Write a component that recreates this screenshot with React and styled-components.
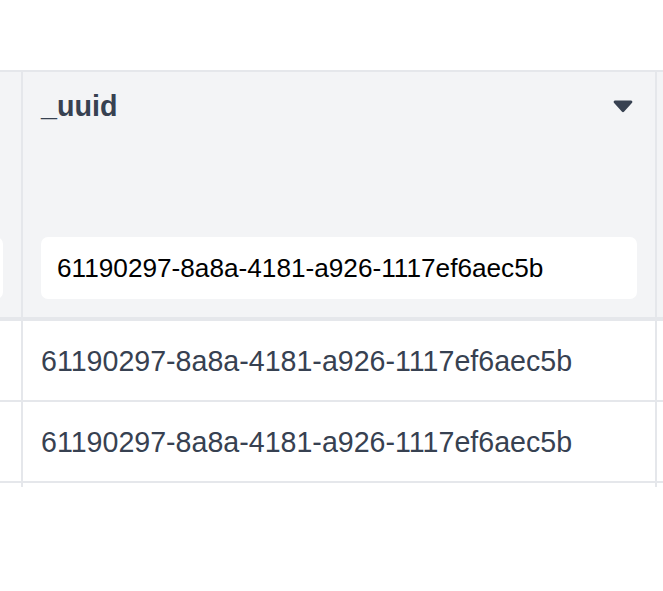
import React from "react";
import styled, { createGlobalStyle } from "styled-components";

const Global = createGlobalStyle`
  html, body { margin: 0; padding: 0; background: #ffffff; }
  body { font-family: "Liberation Sans", Arial, sans-serif; }
  * { box-sizing: border-box; }
`;

const Page = styled.div`
  width: 663px;
  height: 591px;
  padding-top: 70px;
  overflow: hidden;
  background: #ffffff;
`;

const Viewport = styled.div`
  width: 100%;
  overflow: hidden;
  border-top: 2px solid #e5e7eb;
`;

const Table = styled.div`
  display: flex;
  flex-direction: column;
  width: max-content;
  margin-left: -177px;
`;

const Row = styled.div`
  display: flex;
  background: ${(p) => (p.$head ? "#f3f4f6" : "#ffffff")};
  border-bottom: ${(p) => (p.$head ? "4px" : p.$spacer ? "0" : "2px")} solid #e5e7eb;
`;

const Cell = styled.div`
  width: ${(p) => p.$w}px;
  flex: none;
  border-right: 2px solid #e5e7eb;
  padding: ${(p) => (p.$head ? "18px" : "0 18px")};
  height: ${(p) => p.$h}px;
  display: flex;
  flex-direction: column;
  justify-content: ${(p) => (p.$head ? "space-between" : "center")};
`;

const TitleBar = styled.div`
  display: flex;
  align-items: center;
  justify-content: space-between;
  height: 32px;
`;

const Title = styled.span`
  font-size: 28.7px;
  line-height: 32px;
  font-weight: 700;
  color: #374151;
`;

const Caret = styled.svg`
  width: 20px;
  height: 14px;
  margin-right: 4px;
  display: block;
`;

const Filter = styled.input`
  width: 100%;
  height: 62px;
  border: none;
  outline: none;
  border-radius: 7px;
  background: #ffffff;
  padding: 0 16px;
  font-family: "Liberation Sans", Arial, sans-serif;
  font-size: 26.2px;
  color: #000000;
`;

const Value = styled.span`
  font-size: 28.6px;
  line-height: 32px;
  color: #374151;
  white-space: nowrap;
`;

const uuid = "61190297-8a8a-4181-a926-1117ef6aec5b";
const W = [200, 634, 300];

const Caption = ({ title }) => (
  <TitleBar>
    <Title>{title}</Title>
    {title && (
      <Caret viewBox="0 0 20 14">
        <path d="M2 1.5 H18 a1.4 1.4 0 0 1 1.1 2.2 L11.2 12.6 a1.6 1.6 0 0 1 -2.4 0 L0.9 3.7 A1.4 1.4 0 0 1 2 1.5 Z" fill="#374151" />
      </Caret>
    )}
  </TitleBar>
);

export default function App() {
  return (
    <Page>
      <Global />
      <Viewport>
        <Table>
          <Row $head>
            <Cell $w={W[0]} $h={245} $head>
              <Caption title="" />
              <Filter defaultValue="" readOnly aria-label="filter id" />
            </Cell>
            <Cell $w={W[1]} $h={245} $head>
              <Caption title="_uuid" />
              <Filter defaultValue={uuid} readOnly aria-label="filter uuid" />
            </Cell>
            <Cell $w={W[2]} $h={245} $head>
              <Caption title="" />
            </Cell>
          </Row>
          {[0, 1].map((i) => (
            <Row key={i}>
              <Cell $w={W[0]} $h={79} />
              <Cell $w={W[1]} $h={79}>
                <Value>{uuid}</Value>
              </Cell>
              <Cell $w={W[2]} $h={79} />
            </Row>
          ))}
          <Row $spacer>
            <Cell $w={W[0]} $h={4} />
            <Cell $w={W[1]} $h={4} />
            <Cell $w={W[2]} $h={4} />
          </Row>
        </Table>
      </Viewport>
    </Page>
  );
}
